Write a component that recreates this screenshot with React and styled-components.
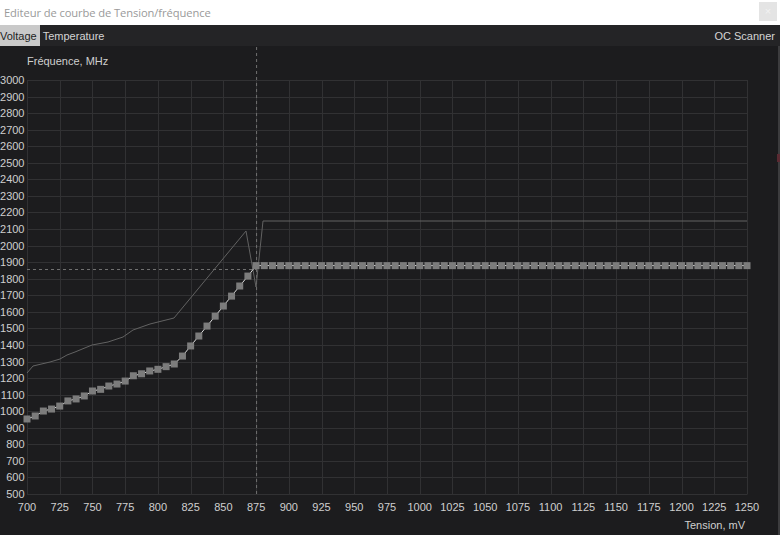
import styled, { createGlobalStyle } from "styled-components";

const GlobalStyle = createGlobalStyle`
  html, body {
    margin: 0;
    padding: 0;
    background: #1c1c1e;
    overflow: hidden;
  }
  body {
    font-family: "Liberation Sans", Arial, sans-serif;
  }
`;

const Window = styled.div`
  width: 780px;
  height: 535px;
  display: flex;
  flex-direction: column;
  background: #1c1c1e;
`;

const TitleBar = styled.div`
  height: 25px;
  flex: 0 0 25px;
  background: #ffffff;
  display: flex;
  align-items: center;
  justify-content: space-between;
  padding: 0 3px 0 4px;
  box-sizing: border-box;
`;

const Title = styled.span`
  font-family: "Open Sans", "Noto Sans", sans-serif;
  font-size: 11.2px;
  color: #9a9a9a;
  letter-spacing: -0.1px;
`;

const CloseButton = styled.div`
  width: 18px;
  height: 19px;
  background: #e4e4e4;
  color: #f2f2f2;
  font-size: 11px;
  display: flex;
  align-items: center;
  justify-content: center;
  margin-top: -3px;
`;

const TabBar = styled.div`
  height: 21px;
  flex: 0 0 21px;
  background: #242426;
  display: flex;
  align-items: stretch;
  font-size: 11px;
`;

const Tab = styled.div`
  display: flex;
  align-items: center;
  padding: 0 ${(p) => (p.$right ? "5px" : "3px")} 0 ${(p) => (p.$active ? "0" : "3px")};
  margin-left: ${(p) => (p.$right ? "auto" : "0")};
  background: ${(p) => (p.$active ? "#c9c9c9" : "transparent")};
  color: ${(p) => (p.$active ? "#1e1e1e" : "#d4d4d4")};
`;

const Body = styled.div`
  flex: 1;
  display: flex;
  min-height: 0;
`;

const ChartArea = styled.div`
  flex: 1;
  display: flex;
  flex-direction: column;
`;

const AxisTitle = styled.div`
  font-size: 11px;
  line-height: 14px;
  color: #cfcfcf;
  padding: ${(p) => (p.$bottom ? "0 33px 0 0" : "8px 0 0 27px")};
  text-align: ${(p) => (p.$bottom ? "right" : "left")};
`;

const ChartSvg = styled.svg`
  display: block;
  overflow: visible;
`;

const ScrollEdge = styled.div`
  width: 2px;
  flex: 0 0 2px;
  background: #3c3c3e;
  position: relative;
`;

const RedMark = styled.div`
  position: absolute;
  left: -1px;
  top: 108px;
  width: 3px;
  height: 8px;
  background: #5a2a32;
`;

const X0 = 27;
const X1 = 747;
const Y_TOP = 12;
const Y_BOT = 426;
const xOf = (mv) => X0 + ((mv - 700) / 550) * (X1 - X0);
const yOf = (f) => Y_TOP + ((3000 - f) / 2500) * (Y_BOT - Y_TOP);

const rising = [
  953, 971, 1001, 1013, 1031, 1062, 1074, 1092, 1122, 1132, 1152, 1164, 1182,
  1214, 1226, 1243, 1253, 1269, 1285, 1333, 1394, 1454, 1514, 1574, 1635, 1695,
  1756, 1816,
];
const points = [];
for (let i = 0; i <= 88; i++) {
  const mv = 700 + i * 6.25;
  const f = i < rising.length ? rising[i] : 1879;
  points.push([xOf(mv), yOf(f)]);
}

// upper (reference) curve, page coordinates shifted to chart coordinates
const upper = [
  [27, 373], [33, 366], [50, 362], [60, 359], [67, 355], [75, 352], [92, 345],
  [108, 342], [123, 337], [133, 330], [150, 324], [174, 318], [246, 231],
  [256, 287], [263, 221], [747, 221],
].map(([x, y]) => [x, y - 68]);

const yTicks = [];
for (let f = 500; f <= 3000; f += 100) yTicks.push(f);
const xTicks = [];
for (let mv = 700; mv <= 1250; mv += 25) xTicks.push(mv);

const toPath = (pts) => pts.map(([x, y], i) => `${i ? "L" : "M"}${x.toFixed(1)} ${y.toFixed(1)}`).join(" ");

function Chart() {
  const crossX = xOf(875) + 0.5;
  const crossY = 201;
  return (
    <ChartSvg width="778" height="450" viewBox="0 0 778 450">
      <g stroke="#313133" strokeWidth="1">
        {yTicks.map((f) => (
          <line key={f} x1={X0} x2={X1} y1={Math.round(yOf(f)) + 0.5} y2={Math.round(yOf(f)) + 0.5} />
        ))}
        {xTicks.map((mv) => (
          <line key={mv} x1={Math.round(xOf(mv)) + 0.5} x2={Math.round(xOf(mv)) + 0.5} y1={Y_TOP} y2={Y_BOT + 0.5} />
        ))}
      </g>
      <g fill="#cfcfcf" fontSize="11" fontFamily="Liberation Sans, Arial, sans-serif">
        {yTicks.map((f) => (
          <text key={f} x="24.5" y={yOf(f) + 4} textAnchor="end">{f}</text>
        ))}
        {xTicks.map((mv) => (
          <text key={mv} x={xOf(mv)} y="443" textAnchor="middle">{mv}</text>
        ))}
      </g>
      <g stroke="#707070" strokeWidth="1" strokeDasharray="3 3">
        <line x1={crossX} x2={crossX} y1={-21} y2={Y_BOT} />
        <line x1={X0} x2={crossX} y1={crossY + 0.5} y2={crossY + 0.5} />
      </g>
      <path d={toPath(upper)} fill="none" stroke="#626262" strokeWidth="1" />
      <path d={toPath(points)} fill="none" stroke="#dcdcdc" strokeWidth="1" />
      <g fill="#7c7c7c">
        {points.map(([x, y], i) => (
          <rect key={i} x={x - 3.5} y={y - 3.5} width="7" height="7" />
        ))}
      </g>
    </ChartSvg>
  );
}

export default function App() {
  return (
    <Window>
      <GlobalStyle />
      <TitleBar>
        <Title>Editeur de courbe de Tension/fréquence</Title>
        <CloseButton>×</CloseButton>
      </TitleBar>
      <TabBar>
        <Tab $active>Voltage</Tab>
        <Tab>Temperature</Tab>
        <Tab $right>OC Scanner</Tab>
      </TabBar>
      <Body>
        <ChartArea>
          <AxisTitle>Fréquence, MHz</AxisTitle>
          <Chart />
          <AxisTitle $bottom>Tension, mV</AxisTitle>
        </ChartArea>
        <ScrollEdge>
          <RedMark />
        </ScrollEdge>
      </Body>
    </Window>
  );
}
